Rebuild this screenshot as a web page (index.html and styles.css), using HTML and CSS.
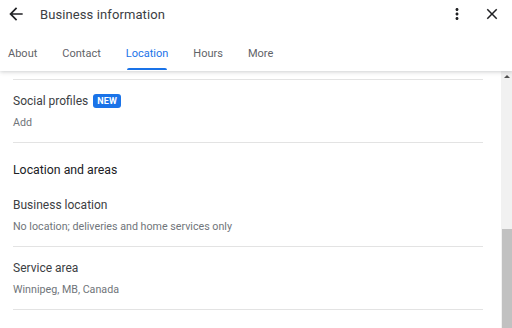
FILE: index.html
```html
<!DOCTYPE html>
<html>
<head>
<meta charset="utf-8">
<link rel="stylesheet" href="styles.css">
</head>
<body>
<div class="app">
  <header class="header">
    <div class="topbar">
      <span class="icon back">
        <svg viewBox="0 0 24 24" width="20" height="20"><path d="M20 11H7.83l5.59-5.59L12 4l-8 8 8 8 1.41-1.41L7.83 13H20v-2z"/></svg>
      </span>
      <span class="title">Business information</span>
      <span class="spacer"></span>
      <span class="icon more">
        <svg viewBox="0 0 24 24" width="18" height="18"><path d="M12 8c1.1 0 2-.9 2-2s-.9-2-2-2-2 .9-2 2 .9 2 2 2zm0 2c-1.1 0-2 .9-2 2s.9 2 2 2 2-.9 2-2-.9-2-2-2zm0 6c-1.1 0-2 .9-2 2s.9 2 2 2 2-.9 2-2-.9-2-2-2z"/></svg>
      </span>
      <span class="icon close">
        <svg viewBox="0 0 24 24" width="18" height="18"><path d="M19 6.41L17.59 5 12 10.59 6.41 5 5 6.41 10.59 12 5 17.59 6.41 19 12 13.41 17.59 19 19 17.59 13.41 12z"/></svg>
      </span>
    </div>
    <nav class="tabs">
      <span class="tab">About</span>
      <span class="tab">Contact</span>
      <span class="tab active">Location</span>
      <span class="tab">Hours</span>
      <span class="tab">More</span>
    </nav>
  </header>
  <div class="main">
    <div class="content">
      <div class="stub"></div>
      <div class="item">
        <div class="item-title">Social profiles <span class="badge">NEW</span></div>
        <div class="item-sub">Add</div>
      </div>
      <div class="section">Location and areas</div>
      <div class="item">
        <div class="item-title">Business location</div>
        <div class="item-sub">No location; deliveries and home services only</div>
      </div>
      <div class="item">
        <div class="item-title">Service area</div>
        <div class="item-sub">Winnipeg, MB, Canada</div>
      </div>
    </div>
    <div class="scrollbar">
      <div class="arrow"></div>
      <div class="track"></div>
      <div class="thumb"></div>
    </div>
  </div>
</div>
</body>
</html>
```

FILE: styles.css
```css
html, body {
  margin: 0;
  padding: 0;
  background: #ffffff;
}
body {
  width: 512px;
  height: 328px;
  overflow: hidden;
  font-family: Roboto, "Liberation Sans", Arial, sans-serif;
}
.app {
  display: flex;
  flex-direction: column;
  height: 328px;
}
.header {
  height: 71px;
  position: relative;
  z-index: 2;
  background: #fff;
  box-shadow: 0 1px 4px rgba(60, 64, 67, 0.25);
  display: flex;
  flex-direction: column;
}
.topbar {
  height: 28px;
  display: flex;
  align-items: center;
}
.icon {
  display: flex;
  align-items: center;
  justify-content: center;
}
.icon svg {
  fill: #202124;
}
.back {
  width: 20px;
  margin-left: 6px;
}
.title {
  margin-left: 14px;
  font-size: 13px;
  color: #3c4043;
  letter-spacing: 0.1px;
}
.spacer {
  flex: 1;
}
.more {
  width: 18px;
  margin-right: 17px;
}
.close {
  width: 18px;
  margin-right: 11px;
}
.tabs {
  display: flex;
  gap: 25px;
  padding-left: 8px;
  flex: 1;
}
.tab {
  font-size: 11px;
  color: #5f6368;
  padding-top: 19px;
  line-height: 14px;
  position: relative;
}
.tab.active {
  color: #1a73e8;
}
.tab.active::after {
  content: "";
  position: absolute;
  left: 1px;
  right: 1px;
  bottom: 1px;
  height: 2px;
  background: #1a73e8;
  border-radius: 2px 2px 0 0;
}
.main {
  flex: 1;
  display: flex;
  min-height: 0;
}
.content {
  flex: 1;
  padding-left: 13px;
  padding-right: 18px;
}
.stub {
  height: 8px;
  border-bottom: 1px solid #e3e3e3;
}
.item {
  padding: 11px 0 11px;
  border-bottom: 1px solid #e3e3e3;
}
.item-title {
  font-size: 12px;
  line-height: 20px;
  height: 20px;
  color: #3c4043;
  display: flex;
  align-items: center;
}
.badge {
  margin-left: 5px;
  background: #1a73e8;
  color: #fff;
  font-size: 9px;
  font-weight: 700;
  line-height: 14px;
  height: 14px;
  padding: 0 4px;
  border-radius: 3px;
  letter-spacing: 0.2px;
}
.item-sub {
  margin-top: 4px;
  font-size: 10.7px;
  line-height: 16px;
  color: #70757a;
}
.section {
  padding: 17px 0 4px;
  font-size: 12.3px;
  line-height: 20px;
  font-weight: 400;
  color: #202124;
}
.scrollbar {
  width: 11px;
  background: #f1f1f1;
  display: flex;
  flex-direction: column;
  align-items: flex-end;
}
.arrow {
  align-self: center;
  margin-top: 4px;
  width: 0;
  height: 0;
  border-left: 3px solid transparent;
  border-right: 3px solid transparent;
  border-bottom: 3px solid #505050;
}
.track {
  flex: 1;
}
.thumb {
  width: 10px;
  height: 99px;
  background: #c1c1c1;
}
```
